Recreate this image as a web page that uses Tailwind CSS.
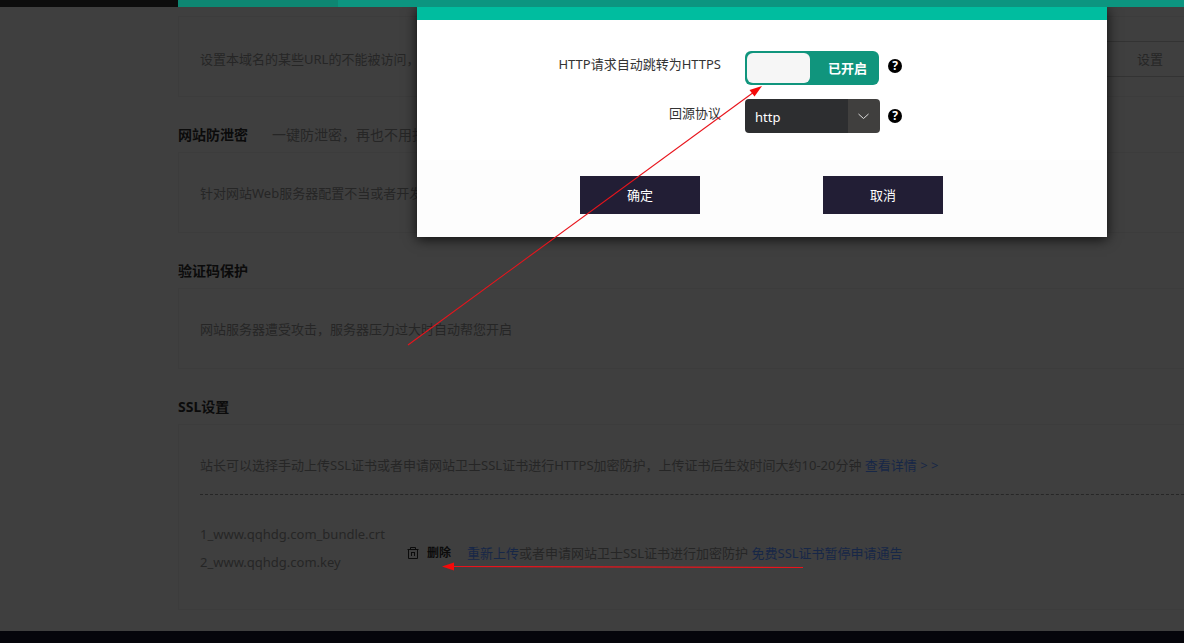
<!DOCTYPE html>
<html lang="zh-CN">
<head>
<meta charset="utf-8">
<meta name="viewport" content="width=device-width, initial-scale=1">
<title>SSL设置</title>
<script src="https://cdn.jsdelivr.net/npm/@tailwindcss/browser@4"></script>
</head>
<body class="relative flex min-h-screen flex-col overflow-x-hidden bg-[#3f3f3f] font-['Noto_Sans','Noto_Sans_CJK_SC',sans-serif] text-[13px] leading-5 text-[#262626]">
<header class="relative z-20 flex h-[7px] bg-[#0c9580]">
  <div class="w-[178px] bg-[#0d0d0d]"></div>
  <div class="w-40 bg-[#0e8672]"></div>
</header>

<main class="flex flex-1 flex-col gap-7 pt-[9px] pb-[21px] pl-[178px]">
  <section class="flex h-[81px] items-center justify-between border border-r-0 border-[#3c3c3c] pt-1 pl-[21px]">
    <p class="whitespace-nowrap">设置本域名的某些URL的不能被访问，</p>
    <button type="button" class="h-9 w-[84px] border border-r-0 border-[#333] pl-9 text-left">设置</button>
  </section>

  <section>
    <div class="mb-[7px] flex gap-6 whitespace-nowrap text-[14px]">
      <h2 class="font-bold text-[#0b0b0b]">网站防泄密</h2>
      <p>一键防泄密，再也不用担心</p>
    </div>
    <div class="flex h-[81px] items-center border border-r-0 border-[#3c3c3c] pl-[21px]">
      <p class="whitespace-nowrap">针对网站Web服务器配置不当或者开发</p>
    </div>
  </section>

  <section>
    <h2 class="mb-[7px] text-[14px] font-bold text-[#0b0b0b]">验证码保护</h2>
    <div class="flex h-[81px] items-center border border-r-0 border-[#3c3c3c] pl-[21px]">
      <p>网站服务器遭受攻击，服务器压力过大时自动帮您开启</p>
    </div>
  </section>

  <section>
    <h2 class="mb-[7px] text-[14px] font-bold text-[#0b0b0b]">SSL设置</h2>
    <div class="border border-r-0 border-[#3c3c3c] pt-[30px] pb-[33px] pl-[21px]">
      <p class="border-b border-dashed border-[#262626] pb-[19px]">站长可以选择手动上传SSL证书或者申请网站卫士SSL证书进行HTTPS加密防护，上传证书后生效时间大约10-20分钟 <a href="#" class="text-[#172747]">查看详情 &gt; &gt;</a></p>
      <div class="flex items-center pt-[25px]">
        <ul class="w-[207px] leading-7">
          <li>1_www.qqhdg.com_bundle.crt</li>
          <li>2_www.qqhdg.com.key</li>
        </ul>
        <div class="flex items-center gap-4 pt-2.5">
          <button type="button" class="flex items-center gap-2 text-[12px] font-bold text-[#0b0b0b]">
            <svg class="h-3 w-3" viewBox="0 0 12 12" fill="none" stroke="currentColor" aria-hidden="true"><path d="M.5 2.500h11M3.500 2V.5h5V2M1.500 3v8.500h9V3M4.500 5v4M7.500 5v4M4.500 5.500h3"/></svg>
            <span>删除</span>
          </button>
          <p><a href="#" class="text-[#172747]">重新上传</a>或者申请网站卫士SSL证书进行加密防护 <a href="#" class="text-[#172747]">免费SSL证书暂停申请通告</a></p>
        </div>
      </div>
    </div>
  </section>
</main>

<footer class="h-3 bg-[#05050b]"></footer>

<div role="dialog" aria-label="HTTPS设置" class="absolute top-[7px] right-[77px] left-[417px] z-10 bg-white text-[#333] shadow-[0_2px_12px_rgba(0,0,0,0.8)]">
  <div class="h-[13px] bg-[#00bd9f]"></div>
  <form>
    <div class="flex flex-col gap-[14px] pt-[31px] pb-[27px]">
      <div class="flex h-[34px] items-center">
        <label for="jump" class="mr-6 w-[304px] pb-2 text-right">HTTP请求自动跳转为HTTPS</label>
        <label class="flex h-[34px] w-[134px] cursor-pointer items-center justify-between rounded-md bg-[#10957d] py-0.5 pr-3 pl-0.5 font-bold text-white">
          <input id="jump" type="checkbox" checked class="h-full w-[63px] appearance-none rounded-md bg-[#f6f6f6]">
          <span>已开启</span>
        </label>
        <button type="button" aria-label="帮助" class="ml-[9px] mb-1 flex size-[14px] items-center justify-center rounded-full bg-black text-[12px] leading-3 font-bold text-white">?</button>
      </div>
      <div class="flex h-[34px] items-center">
        <label for="proto" class="mr-6 w-[304px] pb-1.5 text-right">回源协议</label>
        <div class="relative h-[34px] w-[135px]">
          <select id="proto" class="h-full w-full appearance-none rounded-sm bg-linear-to-r from-[#2d2e30] from-[103px] to-[#403f3e] to-[103px] pt-0.5 pl-[10px] text-[13px] text-white">
            <option>http</option>
            <option>https</option>
          </select>
          <svg class="pointer-events-none absolute top-[14px] right-[11px] h-[7px] w-[11px]" viewBox="0 0 11 7" fill="none" stroke="#ddd" aria-hidden="true"><path d="M.5 1l5 4.500L10.500 1"/></svg>
        </div>
        <button type="button" aria-label="帮助" class="ml-2 flex size-[14px] items-center justify-center rounded-full bg-black text-[12px] leading-3 font-bold text-white">?</button>
      </div>
    </div>
    <div class="flex gap-[123px] bg-[#fdfdfd] pt-4 pb-[23px] pl-[163px] text-white">
      <button type="button" class="h-[38px] w-[120px] bg-[#221e35]">确定</button>
      <button type="button" class="h-[38px] w-[120px] bg-[#221e35]">取消</button>
    </div>
  </form>
</div>

<svg class="pointer-events-none absolute top-0 left-0 z-30 h-[643px] w-[1184px]" viewBox="0 0 1184 643" aria-hidden="true">
  <g stroke="#e8141c" stroke-width="1.100"><path d="M408 345L754 92"/><path d="M803 567.500L452 566.500"/></g>
  <g fill="#f50a0a"><path d="M762 86l-7.500 10.500-5-6.500z"/><path d="M442 566.500l12-4v8z"/></g>
</svg>
</body>
</html>
